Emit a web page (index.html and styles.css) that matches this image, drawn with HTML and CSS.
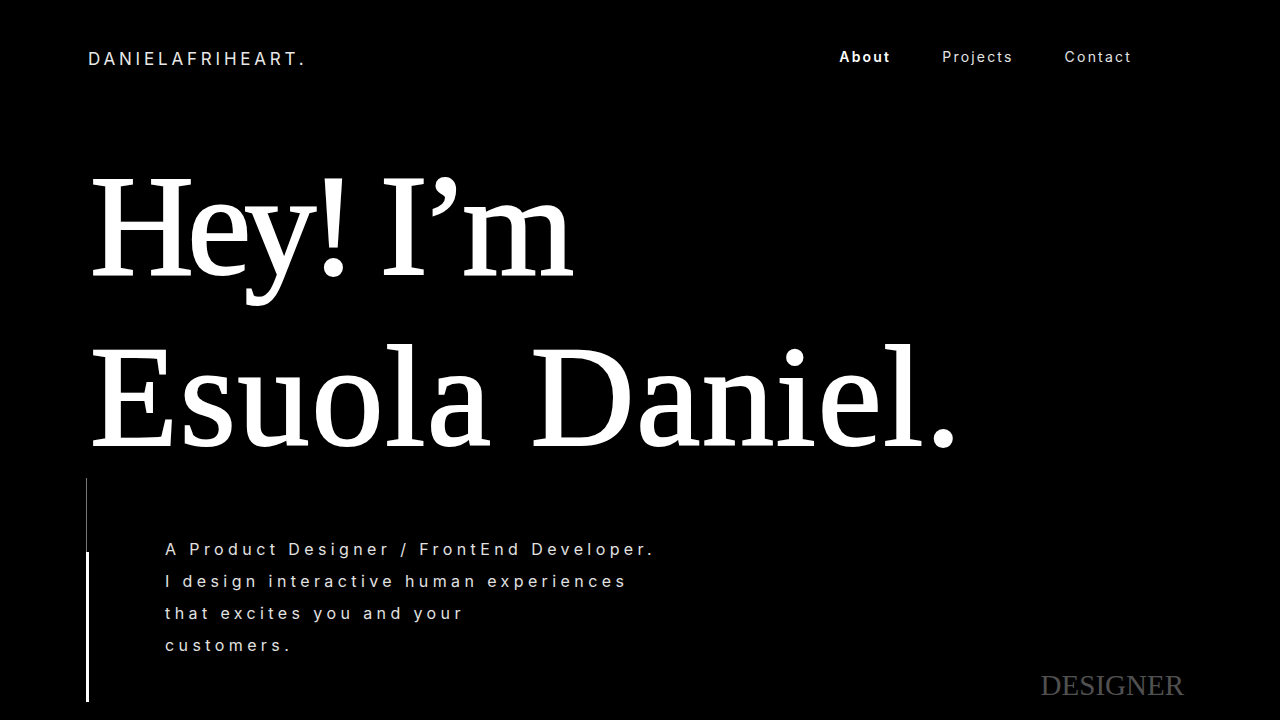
FILE: index.html
```html
<!DOCTYPE html>
<html lang="en">
<head>
<meta charset="utf-8">
<title>Daniel Afriheart</title>
<link rel="stylesheet" href="styles.css">
</head>
<body>
<div class="page">
  <header class="header">
    <div class="logo">DANIELAFRIHEART.</div>
    <nav class="nav">
      <a class="nav-link active" href="#">About</a>
      <a class="nav-link" href="#">Projects</a>
      <a class="nav-link" href="#">Contact</a>
    </nav>
  </header>
  <main class="hero">
    <h1 class="title"><span class="line line-1">Hey! I’m</span><span class="line line-2">Esuola Daniel.</span></h1>
    <div class="intro">
      <div class="bar"><div class="bar-thin"></div><div class="bar-thick"></div></div>
      <p class="lead">A Product Designer / FrontEnd Developer.<br>I design interactive human experiences<br>that excites you and your<br>customers.</p>
      <div class="tag">DESIGNER</div>
    </div>
  </main>
</div>
</body>
</html>
```
FILE: styles.css
```css
* { box-sizing: border-box; }
html, body { margin: 0; padding: 0; background: #000; }
body { color: #fff; font-family: Inter, "Noto Sans", sans-serif; overflow: hidden; }
.page { width: 1280px; height: 720px; overflow: hidden; }

.header {
  display: flex;
  justify-content: space-between;
  align-items: flex-start;
  padding: 48px 148px 0 88px;
  height: 70px;
}
.logo {
  font-size: 17px;
  letter-spacing: 3.8px;
  color: #e8e8e8;
  line-height: 22px;
}
.nav { display: flex; gap: 51px; }
.nav-link {
  color: #e4e4e4;
  text-decoration: none;
  font-size: 14px;
  letter-spacing: 2.2px;
  line-height: 18px;
}
.nav-link.active { font-weight: 600; color: #fff; }

.title {
  margin: 70px 0 -4px 0;
  padding-left: 90px;
  font-family: "Liberation Serif", serif;
  font-weight: normal;
  font-size: 144px;
  line-height: 171px;
  -webkit-text-stroke: 2px #fff;
}
.line { display: block; white-space: nowrap; }
.line-1 { letter-spacing: -6.8px; }
.line-2 { letter-spacing: 1.8px; }

.intro {
  display: flex;
  height: 224px;
  padding-left: 86px;
  padding-right: 96px;
}
.bar { width: 3px; display: flex; flex-direction: column; }
.bar-thin { width: 1px; height: 74px; background: #777; }
.bar-thick { width: 3px; flex: 1; background: #fff; }
.lead {
  margin: 55px 0 0 76px;
  font-size: 16px;
  line-height: 32px;
  letter-spacing: 4.4px;
  color: #e2e2e2;
}
.tag {
  margin-left: auto;
  align-self: flex-end;
  font-family: "Liberation Serif", serif;
  font-size: 29px;
  line-height: 30px;
  color: #505050;
  margin-bottom: 2px;
}
```
